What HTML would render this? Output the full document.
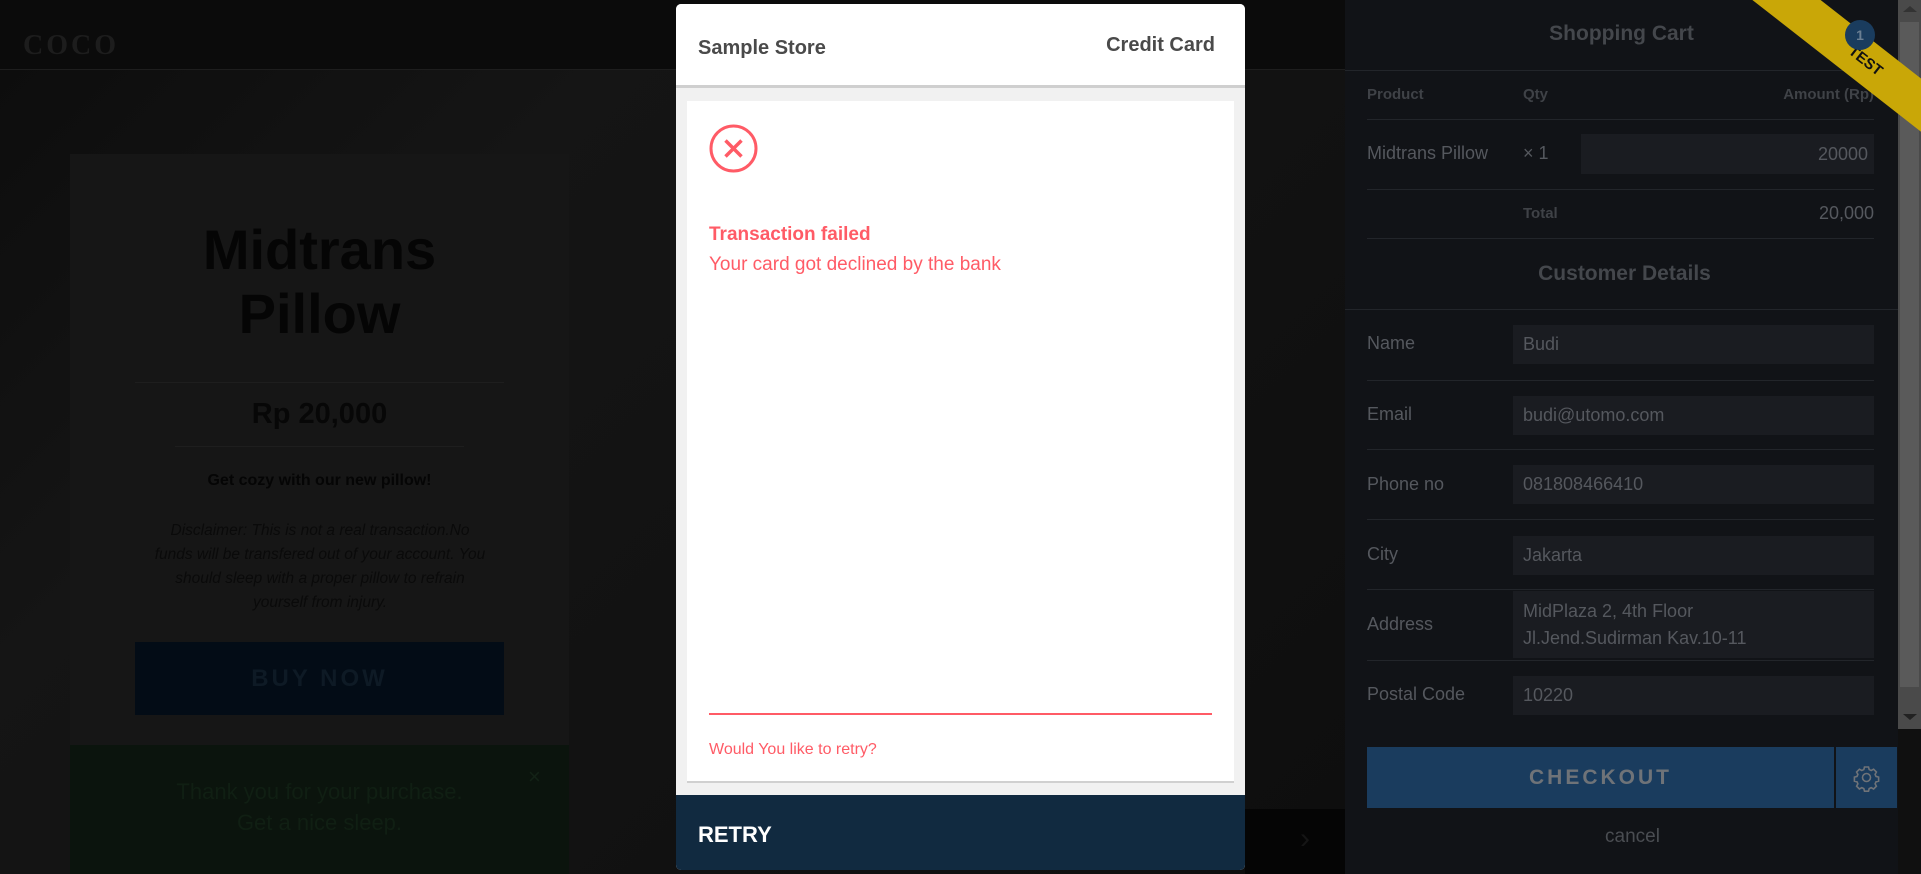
<!DOCTYPE html>
<html><head><meta charset="utf-8"><style>
*{margin:0;padding:0;box-sizing:border-box}
body{width:1921px;height:874px;overflow:hidden;background:#101010;font-family:"Liberation Sans",sans-serif;position:relative}
.a{position:absolute}
.bg{left:0;top:0;width:1345px;height:874px;background:linear-gradient(135deg,#0c0c0c 0%,#151515 30%,#121212 60%,#0e0e0e 100%)}
.row{position:absolute;left:1367px;width:507px;border-bottom:1px solid #22252a}
.inp{position:absolute;left:1513px;width:361px;background:#1a1c21;color:#55585e;font-size:18px;padding-left:10px}
.lab{position:absolute;left:1367px;color:#55585e;font-size:18px}
</style></head><body>
<div class="a bg"></div>
<div class="a" style="left:0;top:0;width:1345px;height:70px;background:#0b0b0b;border-bottom:1px solid #1e1e1e"></div>
<div class="a" style="left:23px;top:30px;font-size:28px;font-weight:bold;color:#1d1d1d;letter-spacing:3px;font-family:'Liberation Serif',serif">COCO</div>
<div class="a" style="left:70px;top:154px;width:499px;height:720px;background:#161616"></div>
<div class="a" style="left:70px;top:218px;width:499px;text-align:center;font-size:56px;font-weight:bold;color:#050505;line-height:64px">Midtrans<br>Pillow</div>
<div class="a" style="left:135px;top:382px;width:369px;border-top:1px solid #1e1e1e"></div>
<div class="a" style="left:70px;top:398px;width:499px;text-align:center;font-size:29px;font-weight:bold;color:#070707">Rp 20,000</div>
<div class="a" style="left:175px;top:446px;width:289px;border-top:1px solid #1e1e1e"></div>
<div class="a" style="left:70px;top:472px;width:499px;text-align:center;font-size:16px;font-weight:bold;color:#050505">Get cozy with our new pillow!</div>
<div class="a" style="left:154px;top:519px;width:332px;text-align:center;font-size:15.5px;font-style:italic;color:#0a0a0a;line-height:24px">Disclaimer: This is not a real transaction.No funds will be transfered out of your account. You should sleep with a proper pillow to refrain yourself from injury.</div>
<div class="a" style="left:135px;top:642px;width:369px;height:73px;background:#030c16;color:#0e1a25;font-size:24px;font-weight:bold;letter-spacing:3px;text-align:center;line-height:73px">BUY NOW</div>
<div class="a" style="left:70px;top:745px;width:499px;height:129px;background:#0b140d"></div>
<div class="a" style="left:70px;top:776px;width:499px;text-align:center;font-size:22px;color:#101f13;line-height:31px">Thank you for your purchase.<br>Get a nice sleep.</div>
<div class="a" style="left:528px;top:764px;font-size:22px;color:#132216">×</div>
<div class="a" style="left:1245px;top:809px;width:100px;height:65px;background:#050505"></div>
<div class="a" style="left:1300px;top:822px;font-size:30px;color:#151515">›</div>
<div class="a" style="left:1345px;top:0;width:553px;height:874px;background:#111317"></div>
<div class="a" style="left:1345px;top:22px;width:553px;text-align:center;font-size:21px;font-weight:bold;color:#44474c">Shopping Cart</div>
<div class="a" style="left:1345px;top:70px;width:553px;border-top:1px solid #22252a"></div>
<div class="row" style="top:86px;height:34px"><span style="position:absolute;left:0;top:0;font-size:15px;font-weight:bold;color:#3f4247">Product</span><span style="position:absolute;left:156px;top:0;font-size:15px;font-weight:bold;color:#3f4247">Qty</span><span style="position:absolute;right:0;top:0;font-size:15px;font-weight:bold;color:#3f4247">Amount (Rp)</span></div>
<div class="lab" style="top:143px">Midtrans Pillow</div>
<div class="lab" style="top:143px;left:1523px">× 1</div>
<div class="inp" style="left:1581px;width:293px;top:134px;height:40px;text-align:right;padding-right:6px;line-height:40px">20000</div>
<div class="row" style="top:189px;height:1px"></div>
<div class="a" style="left:1523px;top:205px;font-size:15px;font-weight:bold;color:#3f4247">Total</div>
<div class="a" style="left:1774px;width:100px;text-align:right;top:203px;font-size:18px;color:#55585e">20,000</div>
<div class="row" style="top:238px;height:1px"></div>
<div class="a" style="left:1345px;top:262px;width:553px;text-align:center;font-size:21px;font-weight:bold;color:#44474c;padding-left:6px">Customer Details</div>
<div class="a" style="left:1345px;top:309px;width:553px;border-top:1px solid #22252a"></div>
<div class="lab" style="top:333px">Name</div><div class="inp" style="top:325px;height:39px;line-height:39px">Budi</div>
<div class="row" style="top:380px;height:1px"></div>
<div class="lab" style="top:404px">Email</div><div class="inp" style="top:396px;height:39px;line-height:39px">budi@utomo.com</div>
<div class="row" style="top:449px;height:1px"></div>
<div class="lab" style="top:474px">Phone no</div><div class="inp" style="top:465px;height:39px;line-height:39px">081808466410</div>
<div class="row" style="top:519px;height:1px"></div>
<div class="lab" style="top:544px">City</div><div class="inp" style="top:536px;height:39px;line-height:39px">Jakarta</div>
<div class="row" style="top:589px;height:1px"></div>
<div class="lab" style="top:614px">Address</div><div class="inp" style="top:591px;height:67px;line-height:27px;padding-top:7px">MidPlaza 2, 4th Floor<br>Jl.Jend.Sudirman Kav.10-11</div>
<div class="row" style="top:660px;height:1px"></div>
<div class="lab" style="top:684px">Postal Code</div><div class="inp" style="top:676px;height:39px;line-height:39px">10220</div>
<div class="a" style="left:1367px;top:747px;width:467px;height:61px;background:#1a3c5e;color:#6f7378;font-size:21px;font-weight:bold;letter-spacing:3px;text-align:center;line-height:61px">CHECKOUT</div>
<div class="a" style="left:1836px;top:747px;width:61px;height:61px;background:#1a3c5e">
<svg width="61" height="61" viewBox="0 0 61 61"><g fill="none" stroke="#6f7378" stroke-width="1.6"><circle cx="30.5" cy="30.5" r="4"/><path d="M28.5 20h4l.7 2.6 2 .9 2.4-1.3 2.8 2.8-1.3 2.4.9 2 2.6.7v4l-2.6.7-.9 2 1.3 2.4-2.8 2.8-2.4-1.3-2 .9-.7 2.6h-4l-.7-2.6-2-.9-2.4 1.3-2.8-2.8 1.3-2.4-.9-2-2.6-.7v-4l2.6-.7.9-2-1.3-2.4 2.8-2.8 2.4 1.3 2-.9z"/></g></svg></div>
<div class="a" style="left:1345px;top:826px;width:553px;text-align:center;font-size:19px;color:#4a4d52;padding-left:22px">cancel</div>
<div class="a" style="left:1898px;top:0;width:23px;height:729px;background:#4a4a4a"></div>
<div class="a" style="left:1900px;top:22px;width:19px;height:665px;background:#5a5a5a"></div>
<div class="a" style="left:1903px;top:6px;width:0;height:0;border-left:7px solid transparent;border-right:7px solid transparent;border-bottom:6px solid #333"></div>
<div class="a" style="left:1903px;top:714px;width:0;height:0;border-left:7px solid transparent;border-right:7px solid transparent;border-top:6px solid #222"></div>
<div class="a" style="left:1712px;top:38px;width:300px;height:42px;background:#c9a707;transform:rotate(38deg);text-align:center;line-height:42px;font-size:15px;font-weight:bold;color:#111;padding-left:8px">TEST</div>
<div class="a" style="left:1845px;top:20px;width:30px;height:30px;border-radius:50%;background:#1a3c5e;color:#6b7f93;font-size:14px;font-weight:bold;text-align:center;line-height:30px">1</div>
<div class="a" style="left:676px;top:4px;width:569px;height:866px;background:#f1f1f1;border-radius:5px;overflow:hidden">
 <div style="position:absolute;left:0;top:0;width:569px;height:84px;background:#fff;border-bottom:3px solid #cfcfcf"></div>
 <div style="position:absolute;left:22px;top:33px;font-size:20px;font-weight:bold;color:#4a4a4a">Sample Store</div>
 <div style="position:absolute;right:30px;top:30px;font-size:20px;font-weight:bold;color:#4a4a4a">Credit Card</div>
 <div style="position:absolute;left:11px;top:97px;width:547px;height:682px;background:#fff;border-bottom:2px solid #d0d0d0"></div>
 <svg style="position:absolute;left:33px;top:120px" width="49" height="49" viewBox="0 0 49 49"><circle cx="24.5" cy="24.5" r="22.5" fill="none" stroke="#ff5b66" stroke-width="3"/><path d="M16.5 16.5l16 16M32.5 16.5l-16 16" stroke="#ff5b66" stroke-width="3.5"/></svg>
 <div style="position:absolute;left:33px;top:220px;font-size:19px;font-weight:bold;color:#ff5b66">Transaction failed</div>
 <div style="position:absolute;left:33px;top:250px;font-size:19px;color:#ff5b66">Your card got declined by the bank</div>
 <div style="position:absolute;left:33px;top:709px;width:503px;border-top:2px solid #ff5b66"></div>
 <div style="position:absolute;left:33px;top:737px;font-size:16px;color:#ff5b66">Would You like to retry?</div>
 <div style="position:absolute;left:0;top:791px;width:569px;height:75px;background:#112a40;color:#fff;font-size:22px;font-weight:bold;padding-left:22px;line-height:80px">RETRY</div>
</div>
</body></html>
